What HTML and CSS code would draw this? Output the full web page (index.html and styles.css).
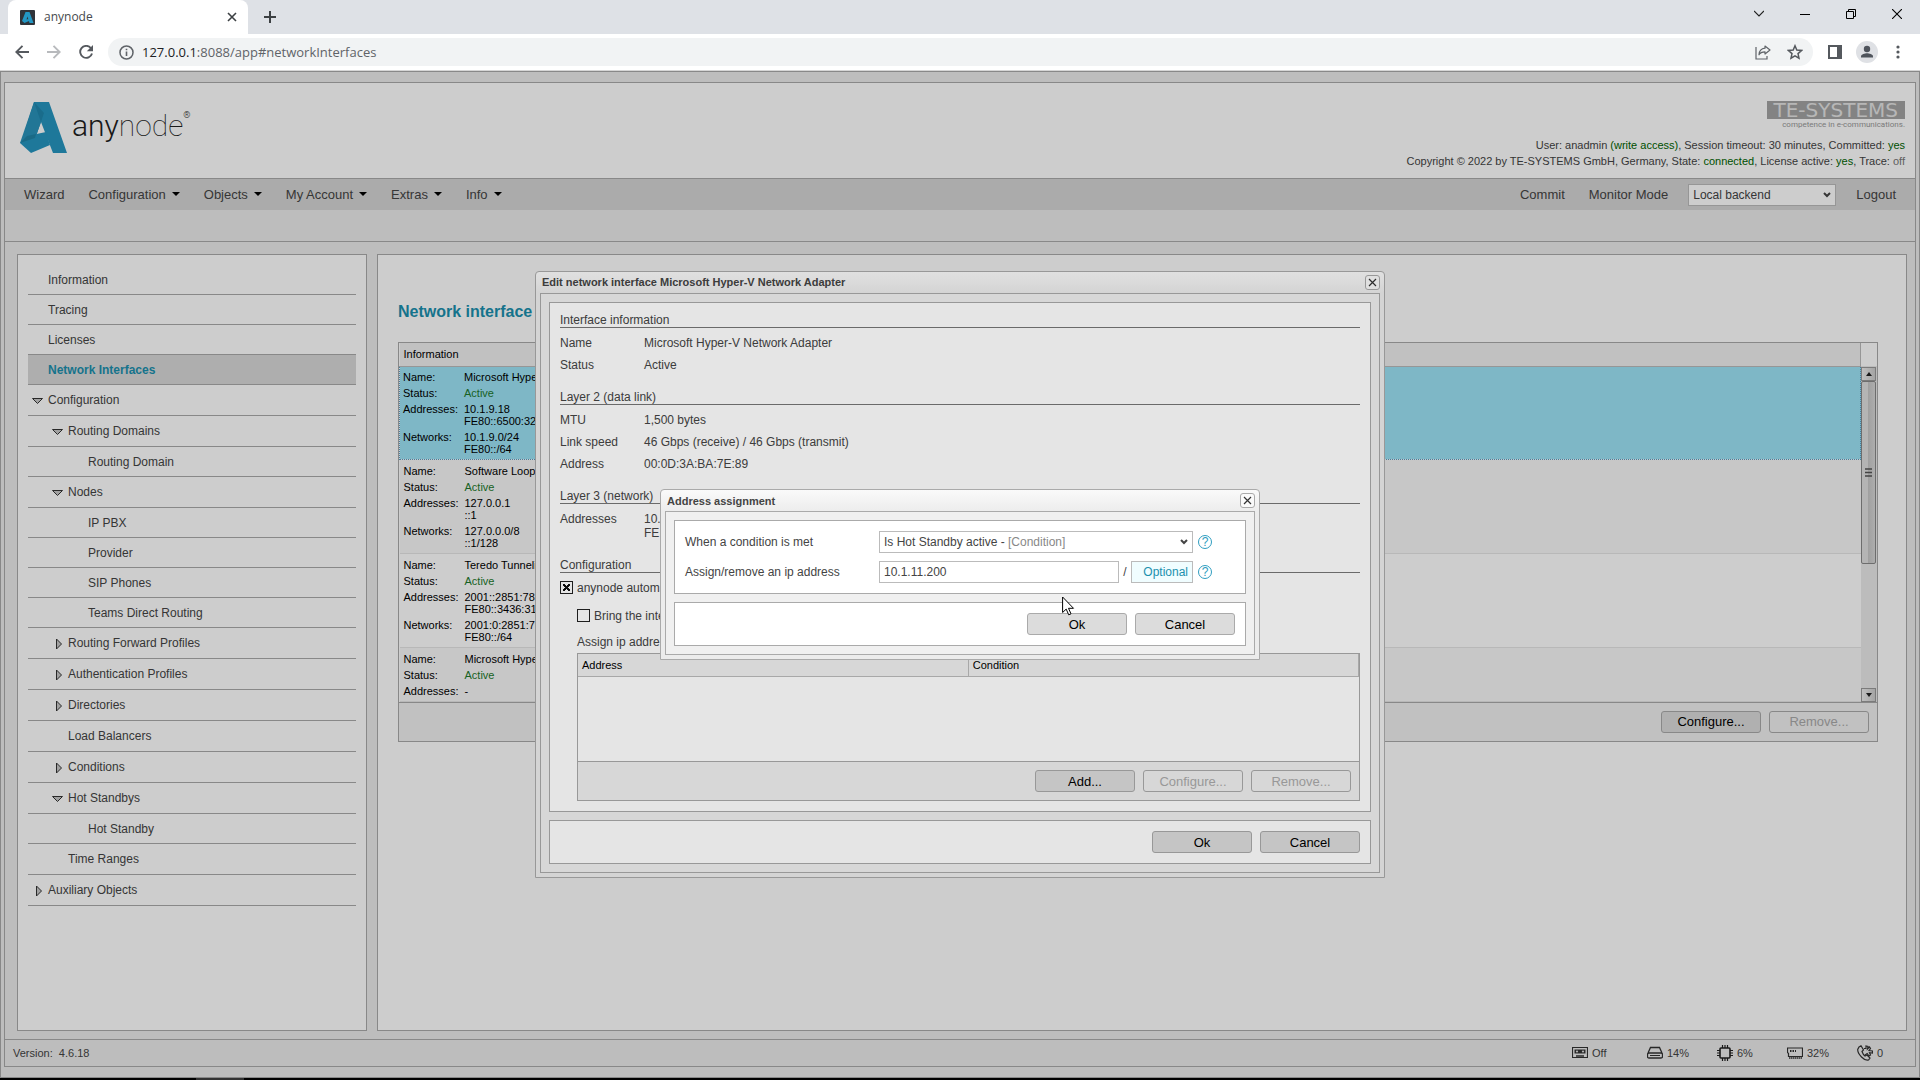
FILE: index.html
```html
<!DOCTYPE html>
<html lang="en">
<head>
    <meta charset="UTF-8">
    <meta name="viewport" content="width=device-width, initial-scale=1.0">
    <title>anynode</title>
    <link rel="stylesheet" href="styles.css">
</head>
<body>

<!-- Browser window -->
<div class="browser">
    <div class="tabs">
        <div class="tab">
            <svg class="favicon" width="15" height="15" viewBox="0 0 15 15"><rect width="15" height="15" rx="1" fill="#30343a"/><path d="M5.5 2h4l4 11h-4L7.5 6.500l-1 3 2-.5.5 2-4.500 2L2 11z" fill="#2397c4"/></svg>
            <span class="tab-title">anynode</span>
            <button class="icon-button" aria-label="Close tab"><svg width="10" height="10" viewBox="0 0 10 10"><path d="M1 1l8 8M9 1L1 9" stroke="#3c4043" stroke-width="1.600"/></svg></button>
        </div>
        <button class="icon-button new-tab" aria-label="New tab"><svg width="12" height="12" viewBox="0 0 12 12"><path d="M6 0v12M0 6h12" stroke="#3c4043" stroke-width="2"/></svg></button>
        <div class="window-buttons">
            <button class="icon-button" aria-label="Search tabs"><svg width="10" height="10" viewBox="0 0 10 10"><path d="M0 2l5 5 5-5" fill="none" stroke="#222" stroke-width="1.200"/></svg></button>
            <button class="icon-button" aria-label="Minimize"><svg width="10" height="10" viewBox="0 0 10 10"><path d="M0 5.500h10" stroke="#000"/></svg></button>
            <button class="icon-button" aria-label="Restore"><svg width="10" height="10" viewBox="0 0 10 10"><path d="M.5 2.500h7v7h-7zM2.500 2.500v-2h7v7h-2" fill="none" stroke="#000"/></svg></button>
            <button class="icon-button" aria-label="Close"><svg width="10" height="10" viewBox="0 0 10 10"><path d="M0 0l10 10M10 0L0 10" stroke="#000" stroke-width="1.100"/></svg></button>
        </div>
    </div>
    <div class="toolbar">
        <button class="icon-button" aria-label="Back"><svg width="14" height="14" viewBox="0 0 14 14"><path d="M14 7H1.500M7.500 .8L1.300 7l6.200 6.200" fill="none" stroke="#55595e" stroke-width="1.900"/></svg></button>
        <button class="icon-button" aria-label="Forward"><svg width="14" height="14" viewBox="0 0 14 14"><path d="M0 7h12.500M6.500 .8L12.700 7l-6.200 6.200" fill="none" stroke="#b8babd" stroke-width="1.900"/></svg></button>
        <button class="icon-button" aria-label="Reload"><svg width="14" height="14" viewBox="0 0 14 14"><path d="M11.800 3A6 6 0 1 0 13 8.500" fill="none" stroke="#55595e" stroke-width="1.900"/><path d="M14 0v6.200H7.800z" fill="#55595e"/></svg></button>
        <div class="address">
            <svg width="15" height="15" viewBox="0 0 15 15"><circle cx="7.500" cy="7.500" r="6.500" fill="none" stroke="#5f6368" stroke-width="1.500"/><path d="M7.500 6.500v4.500M7.500 3.700v1.600" stroke="#5f6368" stroke-width="1.600"/></svg>
            <span class="url"><b>127.0.0.1</b>:8088/app#networkInterfaces</span>
            <svg width="16" height="16" viewBox="0 0 16 16"><path d="M1 3v12h11v-3" fill="none" stroke="#5f6368" stroke-width="1.200"/><path d="M10 2l5 4-5 4V7.800c-3 0-5 1-6 3C4.200 7 6.500 4.600 10 4.200z" fill="none" stroke="#5f6368" stroke-width="1.200" stroke-linejoin="round"/></svg>
            <svg width="16" height="16" viewBox="0 0 16 16"><path d="M8 1.800l1.800 4.300 4.700.4-3.500 3.100 1 4.600-4-2.400-4 2.400 1-4.600L1.500 6.500l4.700-.4z" fill="none" stroke="#55595e" stroke-width="1.500"/></svg>
        </div>
        <svg width="14" height="14" viewBox="0 0 14 14"><path d="M0 0h14v14H0zM2 2v10h7V2z" fill="#55595e" fill-rule="evenodd"/></svg>
        <svg class="avatar" width="22" height="22" viewBox="0 0 22 22"><circle cx="11" cy="11" r="11" fill="#dfe1e5"/><circle cx="11" cy="8" r="3.200" fill="#4f545c"/><path d="M5 16.500v-1.300c0-2 4-3 6-3s6 1 6 3v1.300z" fill="#4f545c"/></svg>
        <svg width="4" height="14" viewBox="0 0 4 14"><circle cx="2" cy="2" r="1.600" fill="#55595e"/><circle cx="2" cy="7" r="1.600" fill="#55595e"/><circle cx="2" cy="12" r="1.600" fill="#55595e"/></svg>
    </div>
</div>

<div class="page">
    <div class="app">
        <header class="header">
            <div class="logo">
                <svg width="48" height="52" viewBox="0 0 48 52">
                    <path d="M14 0h15L47 51H33L21 20l-5 14-14 4z" fill="#2696c0"/>
                    <path d="M14 0l7 20-5 14L0 41z" fill="#2a93bb"/>
                    <path d="M0 41l7-7 19-4 4 13-19 8z" fill="#2696c0"/>
                    <path d="M14 0l7 20 3-9z" fill="#2187ad"/>
                    <path d="M0 41l7-7 9-2-1 4z" fill="#2184a8"/>
                </svg>
                <span class="logo-text">any<i>node</i><sup>®</sup></span>
            </div>
            <div class="account">
                <div class="vendor">TE-SYSTEMS</div>
                <div class="slogan">competence in e-communications.</div>
                <p>User: anadmin <em>(write access)</em>, Session timeout: 30 minutes, Committed: <em>yes</em></p>
                <p>Copyright © 2022 by TE-SYSTEMS GmbH, Germany, State: <em>connected</em>, License active: <em>yes</em>, Trace: <span class="off">off</span></p>
            </div>
        </header>

        <nav class="menu">
            <a href="#wizard">Wizard</a>
            <a href="#configuration" class="drop">Configuration</a>
            <a href="#objects" class="drop">Objects</a>
            <a href="#account" class="drop">My Account</a>
            <a href="#extras" class="drop">Extras</a>
            <a href="#info" class="drop">Info</a>
            <span class="spacer"></span>
            <a href="#commit">Commit</a>
            <a href="#monitor">Monitor Mode</a>
            <span class="select backend">
                <select aria-label="Backend"><option>Local backend</option></select>
                <svg width="8" height="6" viewBox="0 0 8 6"><path d="M1 1l3 3 3-3" fill="none" stroke="#444" stroke-width="2"/></svg>
            </span>
            <a href="#logout">Logout</a>
        </nav>

        <div class="content">
            <nav class="tree">
                <a href="#information" class="level1 leaf">Information</a>
                <a href="#tracing" class="level1 leaf">Tracing</a>
                <a href="#licenses" class="level1 leaf">Licenses</a>
                <a href="#networkInterfaces" class="level1 leaf active">Network Interfaces</a>
                <a href="#config" class="level1"><svg width="12" height="12" viewBox="0 0 12 12"><path d="M.5 3.500h10l-5 5z" fill="#c8c8c8" stroke="#333"/></svg>Configuration</a>
                <a href="#domains" class="level2"><svg width="12" height="12" viewBox="0 0 12 12"><path d="M.5 3.500h10l-5 5z" fill="#c8c8c8" stroke="#333"/></svg>Routing Domains</a>
                <a href="#domain" class="level3 leaf">Routing Domain</a>
                <a href="#nodes" class="level2"><svg width="12" height="12" viewBox="0 0 12 12"><path d="M.5 3.500h10l-5 5z" fill="#c8c8c8" stroke="#333"/></svg>Nodes</a>
                <a href="#pbx" class="level3 leaf">IP PBX</a>
                <a href="#provider" class="level3 leaf">Provider</a>
                <a href="#phones" class="level3 leaf">SIP Phones</a>
                <a href="#teams" class="level3 leaf">Teams Direct Routing</a>
                <a href="#forward" class="level2"><svg width="12" height="12" viewBox="0 0 12 12"><path d="M4.500 1v10l5-5z" fill="#c8c8c8" stroke="#333"/></svg>Routing Forward Profiles</a>
                <a href="#authentication" class="level2"><svg width="12" height="12" viewBox="0 0 12 12"><path d="M4.500 1v10l5-5z" fill="#c8c8c8" stroke="#333"/></svg>Authentication Profiles</a>
                <a href="#directories" class="level2"><svg width="12" height="12" viewBox="0 0 12 12"><path d="M4.500 1v10l5-5z" fill="#c8c8c8" stroke="#333"/></svg>Directories</a>
                <a href="#balancers" class="level2">Load Balancers</a>
                <a href="#conditions" class="level2"><svg width="12" height="12" viewBox="0 0 12 12"><path d="M4.500 1v10l5-5z" fill="#c8c8c8" stroke="#333"/></svg>Conditions</a>
                <a href="#standbys" class="level2"><svg width="12" height="12" viewBox="0 0 12 12"><path d="M.5 3.500h10l-5 5z" fill="#c8c8c8" stroke="#333"/></svg>Hot Standbys</a>
                <a href="#standby" class="level3 leaf">Hot Standby</a>
                <a href="#ranges" class="level2">Time Ranges</a>
                <a href="#auxiliary" class="level1"><svg width="12" height="12" viewBox="0 0 12 12"><path d="M4.500 1v10l5-5z" fill="#c8c8c8" stroke="#333"/></svg>Auxiliary Objects</a>
            </nav>

            <main class="main">
                <h1>Network interface</h1>
                <div class="list">
                    <div class="list-body">
                        <table class="interfaces">
                            <thead>
                                <tr><th>Information</th></tr>
                            </thead>
                            <tbody>
                                <tr class="selected"><td>
                                    <dl>
                                        <dt>Name:</dt><dd>Microsoft Hyper</dd>
                                        <dt>Status:</dt><dd class="ok">Active</dd>
                                        <dt>Addresses:</dt><dd>10.1.9.18<br>FE80::6500:32</dd>
                                        <dt>Networks:</dt><dd>10.1.9.0/24<br>FE80::/64</dd>
                                    </dl>
                                </td></tr>
                                <tr class="odd"><td>
                                    <dl>
                                        <dt>Name:</dt><dd>Software Loop</dd>
                                        <dt>Status:</dt><dd class="ok">Active</dd>
                                        <dt>Addresses:</dt><dd>127.0.0.1<br>::1</dd>
                                        <dt>Networks:</dt><dd>127.0.0.0/8<br>::1/128</dd>
                                    </dl>
                                </td></tr>
                                <tr><td>
                                    <dl>
                                        <dt>Name:</dt><dd>Teredo Tunneli</dd>
                                        <dt>Status:</dt><dd class="ok">Active</dd>
                                        <dt>Addresses:</dt><dd>2001::2851:78<br>FE80::3436:31</dd>
                                        <dt>Networks:</dt><dd>2001:0:2851:7<br>FE80::/64</dd>
                                    </dl>
                                </td></tr>
                                <tr class="odd"><td>
                                    <dl>
                                        <dt>Name:</dt><dd>Microsoft Hyper</dd>
                                        <dt>Status:</dt><dd class="ok">Active</dd>
                                        <dt>Addresses:</dt><dd>-</dd>
                                    </dl>
                                </td></tr>
                            </tbody>
                        </table>
                        <div class="scrollbar">
                            <button class="scroll-button" aria-label="Scroll up"><svg width="6" height="4" viewBox="0 0 6 4"><path d="M3 0l3 4H0z" fill="#222"/></svg></button>
                            <div class="thumb"><svg width="7" height="9" viewBox="0 0 7 9"><path d="M0 1h7M0 4.500h7M0 8h7" stroke="#555" stroke-width="1.500"/></svg></div>
                            <button class="scroll-button down" aria-label="Scroll down"><svg width="6" height="4" viewBox="0 0 6 4"><path d="M0 0h6L3 4z" fill="#222"/></svg></button>
                        </div>
                    </div>
                    <div class="list-footer">
                        <button class="button">Configure...</button>
                        <button class="button" disabled>Remove...</button>
                    </div>
                </div>
            </main>
        </div>

        <footer class="status">
            <span class="version">Version: &nbsp;4.6.18</span>
            <span class="meter trace"><svg width="16" height="14" viewBox="0 0 16 14"><path d="M.5 1.500h15v10H.5z" fill="none" stroke="#333" stroke-width="1.200"/><path d="M2.500 3.500h11v4h-11z" fill="#333"/><circle cx="5" cy="5.500" r="1.100" fill="#ddd"/><circle cx="11" cy="5.500" r="1.100" fill="#ddd"/><path d="M4 10h8" stroke="#333" stroke-width="1.500"/></svg>Off</span>
            <span class="meter"><svg width="16" height="14" viewBox="0 0 16 14"><path d="M1 7l2.500-5.500h9L15 7M2 7h12q1.500 0 1.500 1.500v2Q15.500 12 14 12H2Q.5 12 .5 10.500v-2Q.5 7 2 7z" fill="none" stroke="#333" stroke-width="1.300"/><path d="M3 9.500h10" stroke="#333"/></svg>14%</span>
            <span class="meter"><svg width="16" height="16" viewBox="0 0 16 16"><rect x="3" y="3" width="10" height="10" rx="1" fill="none" stroke="#222" stroke-width="1.600"/><path d="M5.500 0v3M8 0v3M10.500 0v3M5.500 13v3M8 13v3M10.500 13v3M0 5.500h3M0 8h3M0 10.500h3M13 5.500h3M13 8h3M13 10.500h3" stroke="#222" stroke-width="1.200"/></svg>6%</span>
            <span class="meter"><svg width="16" height="14" viewBox="0 0 16 14"><path d="M.5 2h15v8.500H1.500V7.500L.5 6.500z" fill="none" stroke="#333" stroke-width="1.200"/><path d="M3 5h1.500M5.500 5H7M8 5h1" stroke="#333" stroke-width="2"/><path d="M2 12h13" stroke="#333" stroke-width="1.500" stroke-dasharray="1.500 .5"/></svg>32%</span>
            <span class="meter"><svg width="16" height="16" viewBox="0 0 16 16"><path d="M2 2l2-1.200L6.500 5 5 6.500q1 3 3 4.500l2-1 3 3-1.500 2Q8.500 16 4.500 12T.7 4.500z" fill="none" stroke="#333" stroke-width="1.200"/><path d="M7 3.500h2V1l2 .5L10.500 4l2-2 1 1.500-1.500 2 3.500.5v2l-3-.3 1 2.300-1.500 1-1.800-2.500L8 10" fill="none" stroke="#333" stroke-width="1.200"/></svg>0</span>
        </footer>
    </div>

    <!-- Edit network interface -->
    <div class="overlay">
        <section class="dialog dialog-edit">
            <div class="dialog-title">
                <h2>Edit network interface Microsoft Hyper-V Network Adapter</h2>
                <button class="close" aria-label="Close"><svg width="9" height="9" viewBox="0 0 9 9"><path d="M1 1l7 7M8 1L1 8" stroke="#333" stroke-width="1.200"/></svg></button>
            </div>
            <div class="dialog-body">
                <div class="panel">
                    <h3>Interface information</h3>
                    <dl class="fields">
                        <dt>Name</dt><dd>Microsoft Hyper-V Network Adapter</dd>
                        <dt>Status</dt><dd>Active</dd>
                    </dl>
                    <h3>Layer 2 (data link)</h3>
                    <dl class="fields">
                        <dt>MTU</dt><dd>1,500 bytes</dd>
                        <dt>Link speed</dt><dd>46 Gbps (receive) / 46 Gbps (transmit)</dd>
                        <dt>Address</dt><dd>00:0D:3A:BA:7E:89</dd>
                    </dl>
                    <h3>Layer 3 (network)</h3>
                    <dl class="fields">
                        <dt>Addresses</dt><dd>10.<br>FE</dd>
                    </dl>
                    <h3>Configuration</h3>
                    <label class="check"><input type="checkbox" checked>anynode autom</label>
                    <div class="nested">
                        <label class="check"><input type="checkbox">Bring the inte</label>
                        <p class="caption">Assign ip addre</p>
                        <div class="list addresses">
                            <table>
                                <thead>
                                    <tr><th>Address</th><th>Condition</th></tr>
                                </thead>
                            </table>
                            <div class="empty"></div>
                            <div class="list-footer">
                                <button class="button">Add...</button>
                                <button class="button" disabled>Configure...</button>
                                <button class="button" disabled>Remove...</button>
                            </div>
                        </div>
                    </div>
                </div>
                <div class="panel actions">
                    <button class="button">Ok</button>
                    <button class="button">Cancel</button>
                </div>
            </div>
        </section>
    </div>

    <!-- Address assignment -->
    <div class="overlay">
        <section class="dialog dialog-address">
            <div class="dialog-title">
                <h2>Address assignment</h2>
                <button class="close" aria-label="Close"><svg width="9" height="9" viewBox="0 0 9 9"><path d="M1 1l7 7M8 1L1 8" stroke="#333" stroke-width="1.200"/></svg></button>
            </div>
            <div class="dialog-body">
                <div class="panel form">
                    <div class="form-row">
                        <label for="condition">When a condition is met</label>
                        <span class="select condition">
                            <select id="condition"><option>Is Hot Standby active -</option></select>
                            <span class="kind">[Condition]</span>
                            <svg width="8" height="6" viewBox="0 0 8 6"><path d="M1 1l3 3 3-3" fill="none" stroke="#444" stroke-width="2"/></svg>
                        </span>
                        <button class="help" aria-label="Help">?</button>
                    </div>
                    <div class="form-row">
                        <label for="ip">Assign/remove an ip address</label>
                        <span class="ip-fields">
                            <input type="text" id="ip" value="10.1.11.200">
                            <span>/</span>
                            <input type="text" class="prefix" placeholder="Optional" aria-label="Prefix length">
                        </span>
                        <button class="help" aria-label="Help">?</button>
                    </div>
                </div>
                <div class="panel actions">
                    <button class="button">Ok</button>
                    <button class="button">Cancel</button>
                </div>
            </div>
            <svg class="cursor" width="13" height="20" viewBox="0 0 13 20"><path d="M.6 1v15.500l3.600-3.400 2.500 5.700 2.300-1-2.500-5.500h5z" fill="#fff" stroke="#000"/></svg>
        </section>
    </div>
</div>

<div class="taskbar"><div class="taskbar-item"></div></div>

</body>
</html>
```

FILE: styles.css
```css
* {
    box-sizing: border-box;
}
body {
    display: flex;
    flex-direction: column;
    min-height: 100vh;
    margin: 0;
    font-family: "Liberation Sans", Arial, sans-serif;
    font-size: 12px;
    line-height: 14px;
    color: #444;
}
h1, h2, h3, p, dl, dd {
    margin: 0;
}
a {
    color: inherit;
    text-decoration: none;
}
button, input, select {
    font-family: inherit;
    font-size: inherit;
    color: inherit;
}
svg {
    display: block;
    flex: none;
}

/* Browser window */
.browser {
    font-family: "Open Sans", sans-serif;
}
.icon-button {
    display: flex;
    padding: 0;
    border: none;
    background: none;
}
.tabs {
    display: flex;
    align-items: center;
    height: 34px;
    padding-left: 8px;
    background-color: #dee1e6;
}
.tab {
    display: flex;
    align-items: center;
    gap: 9px;
    width: 240px;
    height: 34px;
    padding: 0 11px 0 12px;
    border-radius: 8px 8px 0 0;
    background-color: white;
}
.tab-title {
    flex: 1;
    color: #45494d;
}
.new-tab {
    margin-left: 16px;
}
.window-buttons {
    display: flex;
    gap: 36px;
    height: 28px;
    align-items: center;
    align-self: flex-start;
    margin: 0 18px 0 auto;
}
.toolbar {
    display: flex;
    align-items: center;
    gap: 18px;
    height: 37px;
    padding: 0 20px 0 15px;
    border-bottom: 1px solid #d5d5d5;
    background-color: white;
}
.address {
    display: flex;
    align-items: center;
    flex: 1;
    gap: 16px;
    height: 28px;
    margin: 0 -3px;
    padding: 0 10px 0 11px;
    border-radius: 14px;
    background-color: #f1f3f4;
}
.url {
    flex: 1;
    margin-left: -8px;
    font-size: 13px;
    color: #5f6368;
}
.url b {
    font-weight: normal;
    color: #202124;
}
.avatar {
    margin-left: -4px;
}

/* Application frame */
.page {
    position: relative;
    display: flex;
    flex: 1;
    padding: 10px 3px;
    border: 1px solid #aaa;
    background-color: #ebebeb;
}
.app {
    display: flex;
    flex: 1;
    flex-direction: column;
    border: 1px solid #aaa;
}
.taskbar {
    height: 2px;
    padding-left: 196px;
    background-color: black;
}
.taskbar-item {
    width: 48px;
    height: 2px;
    background-color: #333;
}
.header {
    display: flex;
    justify-content: space-between;
    height: 96px;
    padding: 18px 10px 0 15px;
    border-bottom: 1px solid #aaa;
    background-color: white;
}
.logo {
    display: flex;
    gap: 4px;
    padding-top: 1px;
}
.logo-text {
    padding-top: 6px;
    font-family: Roboto, sans-serif;
    font-size: 30px;
    font-weight: 300;
    line-height: 36px;
    color: #222;
}
.logo-text i {
    font-style: normal;
    font-weight: 100;
}
.logo-text sup {
    font-size: 9px;
    line-height: 0;
    vertical-align: 18px;
}
.account {
    display: flex;
    flex-direction: column;
    align-items: flex-end;
    font-size: 11px;
    line-height: 16px;
}
.account em {
    font-style: normal;
    color: #006400;
}
.off {
    color: #777;
}
.vendor {
    padding: 0 7px;
    font-family: "DejaVu Sans", sans-serif;
    font-size: 20px;
    line-height: 18px;
    color: #e4e4e4;
    background-color: #a3a3a3;
}
.slogan {
    margin-bottom: 6px;
    font-family: Roboto, sans-serif;
    font-size: 8px;
    line-height: 12px;
    color: #999;
}
.menu {
    display: flex;
    align-items: center;
    gap: 24px;
    height: 31px;
    padding: 0 19px;
    font-size: 13px;
    background-color: #d5d5d5;
}
.drop::after {
    content: "";
    display: inline-block;
    margin-left: 6px;
    border: 4px solid transparent;
    border-top-color: black;
    border-bottom: none;
    vertical-align: 3px;
}
.spacer {
    flex: 1;
}
.select {
    position: relative;
    display: flex;
    height: 22px;
}
.select select {
    flex: 1;
    padding: 0 4px;
    border: 1px solid #bbb;
    background-color: white;
    appearance: none;
}
.select svg {
    position: absolute;
    top: 8px;
    right: 5px;
    pointer-events: none;
}
.backend {
    width: 148px;
    margin: 0 -4px;
    font-size: 12px;
}

/* Content */
.content {
    display: flex;
    flex: 1;
    gap: 10px;
    margin-top: 31px;
    padding: 12px 8px 8px 12px;
    border-top: 1px solid #aaa;
}
.tree {
    display: flex;
    flex-direction: column;
    width: 350px;
    padding: 10px;
    border: 1px solid #aaa;
    background-color: white;
}
.tree a {
    display: flex;
    align-items: center;
    height: 31px;
    border-bottom: 1px solid #aaa;
}
.tree svg {
    margin: 2px 4px 0 -16px;
}
.tree .leaf {
    height: 30px;
}
.level1 {
    padding-left: 20px;
}
.level2 {
    padding-left: 40px;
}
.level3 {
    padding-left: 60px;
}
.tree .active {
    font-weight: bold;
    color: #1b90ae;
    background-color: #d8d8d8;
}
.main {
    flex: 1;
    padding: 47px 28px 0 20px;
    border: 1px solid #aaa;
    background-color: white;
}
h1 {
    margin-bottom: 20px;
    font-size: 16px;
    line-height: 20px;
    color: #1b90ae;
}

/* Lists */
.list {
    border: 1px solid #aaa;
    font-size: 11px;
    line-height: 12px;
    color: black;
}
.list table {
    width: 100%;
    border-collapse: collapse;
}
.list th {
    height: 23px;
    padding: 0 4px;
    border: 1px solid #bbb;
    border-width: 0 1px 1px 0;
    font-weight: normal;
    text-align: left;
    background-color: #f0f0f0;
}
.list-body {
    display: flex;
}
.interfaces td {
    padding: 3px 4px 2px;
    border-bottom: 1px solid #e5e5e5;
}
.interfaces dl {
    display: grid;
    grid-template-columns: 61px 1fr;
}
.interfaces dt, .interfaces dd {
    padding: 2px 0;
}
.interfaces .ok {
    color: #1d7a2d;
}
.interfaces .odd {
    background-color: #f8f8f8;
}
.interfaces .selected td {
    border: 1px dotted #5a9fc5;
    padding: 2px 3px;
    background-color: #9de4f7;
}
.scrollbar {
    display: flex;
    flex-direction: column;
    width: 16px;
    padding-top: 24px;
    background: linear-gradient(#fff 23px, #eaeaea 23px);
}
.scroll-button {
    display: flex;
    align-items: center;
    justify-content: center;
    width: 15px;
    height: 14px;
    padding: 0;
    border: 1px solid #999;
    background: linear-gradient(90deg, #eee, #ccc);
}
.scroll-button.down {
    margin-top: auto;
}
.thumb {
    display: flex;
    align-items: center;
    justify-content: center;
    width: 15px;
    height: 183px;
    border: 1px solid #888;
    border-radius: 2px;
    background: linear-gradient(90deg, #e0e0e0 45%, #c8c8c8 50%, #d8d8d8);
}
.list-footer {
    display: flex;
    justify-content: flex-end;
    gap: 8px;
    padding: 8px;
    border-top: 1px solid #aaa;
    background-color: #f0f0f0;
}
.button {
    width: 100px;
    height: 22px;
    padding: 0;
    border: 1px solid #aaa;
    border-radius: 3px;
    font-size: 13px;
    color: black;
    background-color: #dcdcdc;
}
.button:disabled {
    color: #aaa;
    background-color: #f0f0f0;
}

/* Status bar */
.status {
    display: flex;
    align-items: center;
    height: 27px;
    padding-left: 8px;
    border-top: 1px solid #aaa;
    font-size: 11px;
}
.version {
    flex: 1;
}
.meter {
    display: flex;
    align-items: center;
    gap: 4px;
    width: 70px;
}
.meter.trace {
    width: 75px;
}
.meter:last-child {
    width: 58px;
}

/* Dialogs */
.overlay {
    position: absolute;
    inset: -1px;
    display: grid;
    place-items: center;
    background-color: rgba(0, 0, 0, 0.1);
}
.dialog {
    position: relative;
    max-width: 100%;
    padding: 0 4px 4px;
    border: 1px solid #aaa;
    border-radius: 4px 4px 0 0;
    background: linear-gradient(#fafafa, #ececec 22px);
}
.dialog-edit {
    width: 850px;
}
.dialog-address {
    width: 600px;
}
.dialog-title {
    display: flex;
    align-items: center;
    justify-content: space-between;
    height: 21px;
    padding-left: 2px;
}
h2 {
    font-size: 11px;
}
.close {
    display: flex;
    align-items: center;
    justify-content: center;
    width: 15px;
    height: 15px;
    padding: 0;
    border: 1px solid #aaa;
    border-radius: 3px;
    background-color: #fafafa;
}
.dialog-body {
    display: flex;
    flex-direction: column;
    gap: 8px;
    padding: 8px;
    border: 1px solid #aaa;
    background-color: #f0f0f0;
}
.panel {
    padding: 10px;
    border: 1px solid #aaa;
    background-color: white;
}
.actions {
    display: flex;
    justify-content: flex-end;
    gap: 8px;
}
h3 {
    border-bottom: 1px solid #777;
    font-size: 12px;
    font-weight: normal;
}
.fields {
    display: grid;
    grid-template-columns: 84px 1fr;
    margin: 4px 0 14px;
}
.fields dt, .fields dd {
    padding: 4px 0;
}
.check {
    display: flex;
    align-items: center;
    gap: 4px;
    height: 22px;
    margin-top: 4px;
}
.check input {
    width: 13px;
    height: 13px;
    margin: 0;
    border: 1px solid #222;
    background-color: white;
    appearance: none;
}
.check input:checked {
    background:
        linear-gradient(45deg, transparent 40%, #111 40%, #111 60%, transparent 60%) center / 7px 7px no-repeat,
        linear-gradient(-45deg, transparent 40%, #111 40%, #111 60%, transparent 60%) center / 7px 7px no-repeat,
        white;
}
.nested {
    padding: 2px 0 0 17px;
}
.caption {
    padding: 8px 0 4px;
}
.addresses th {
    width: 50%;
}
.empty {
    height: 84px;
}

/* Address form */
.form {
    display: grid;
    gap: 8px;
}
.form-row {
    display: grid;
    grid-template-columns: 194px 314px auto;
    justify-content: start;
    align-items: center;
}
.form input {
    height: 22px;
    padding: 0 4px;
    border: 1px solid #bbb;
}
.kind {
    position: absolute;
    top: 4px;
    left: 129px;
    color: #888;
    pointer-events: none;
}
.ip-fields {
    display: flex;
    align-items: center;
    justify-content: space-between;
}
.ip-fields input {
    width: 240px;
}
.ip-fields .prefix {
    width: 62px;
    text-align: right;
    background-color: #f0fdff;
}
.prefix::placeholder {
    color: #1b90ae;
}
.help {
    width: 14px;
    height: 14px;
    margin-left: 5px;
    padding: 0;
    border: 1px solid #2f9dc0;
    border-radius: 50%;
    font-size: 12px;
    line-height: 12px;
    color: #2f9dc0;
    background: none;
}
.cursor {
    position: absolute;
    top: 106px;
    left: 401px;
}
```
